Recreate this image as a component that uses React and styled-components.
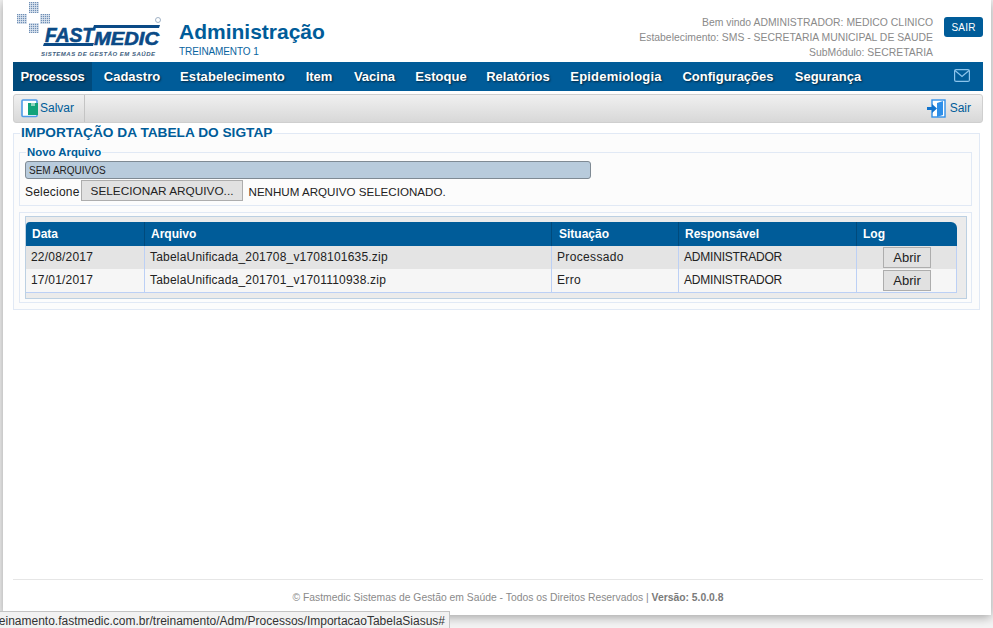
import React from "react";
import styled, { createGlobalStyle } from "styled-components";

const Global = createGlobalStyle`
  html, body {
    margin: 0;
    height: 100%;
    background: #f4f4f4;
    font-family: "Liberation Sans", Arial, sans-serif;
  }
`;

const Stage = styled.div`
  position: relative;
  width: 993px;
  height: 628px;
  overflow: hidden;
`;

const Frame = styled.div`
  margin-left: 3px;
  width: 988px;
  height: 615px;
  box-sizing: border-box;
  padding: 0 8px 0 10px;
  background: #fff;
  box-shadow: 0 2px 10px rgba(0, 0, 0, 0.35);
  display: flex;
  flex-direction: column;
`;

const Header = styled.header`
  height: 62px;
  display: flex;
`;

const LogoBox = styled.div`
  width: 166px;
  height: 62px;
  margin-left: -10px;
  margin-right: 10px;
  flex: none;
`;

const Brand = styled.div`
  padding-top: 19px;
`;

const Title = styled.h1`
  margin: 0 0 1px;
  font-size: 21px;
  line-height: 25px;
  font-weight: bold;
  color: #005c99;
`;

const Sub = styled.div`
  font-size: 10px;
  line-height: 13px;
  letter-spacing: -0.1px;
  color: #0a64a0;
`;

const UserInfo = styled.div`
  margin-left: auto;
  padding-top: 15px;
  text-align: right;
  font-size: 10.4px;
  line-height: 15px;
  color: #8a8a8a;
`;

const ExitButton = styled.button`
  align-self: flex-start;
  margin: 17px 0 0 11px;
  width: 39px;
  height: 20px;
  padding: 0;
  border: 0;
  border-radius: 3px;
  background: #005c99;
  color: #fff;
  font: 10px "Liberation Sans", Arial, sans-serif;
  letter-spacing: 0.2px;
`;

const Nav = styled.nav`
  height: 29px;
  display: flex;
  align-items: stretch;
  background: #005c99;
`;

const NavItem = styled.a`
  display: flex;
  align-items: center;
  justify-content: center;
  width: ${p => p.$w}px;
  margin-right: 4px;
  font-size: 13px;
  font-weight: bold;
  letter-spacing: ${p => p.$ls || 0}px;
  color: #fff;
  white-space: nowrap;
  text-shadow: 1px 1px 2px rgba(0, 0, 0, 0.6);
  background: ${p => (p.$active ? "#004a7c" : "none")};
`;

const MailIcon = styled.svg`
  margin: 7px 13px 0 auto;
  width: 16px;
  height: 13px;
`;

const Toolbar = styled.div`
  height: 29px;
  margin-top: 3px;
  box-sizing: border-box;
  display: flex;
  align-items: center;
  border: 1px solid #cfcfcf;
  border-radius: 3px;
  background: linear-gradient(#f0f0f0, #d8d8d8);
`;

const ToolButton = styled.a`
  display: flex;
  align-items: center;
  height: 100%;
  padding: 0 ${p => (p.$right ? "11px" : "10px")} 1px 7px;
  box-sizing: border-box;
  margin-left: ${p => (p.$right ? "auto" : "0")};
  border-right: ${p => (p.$right ? "0" : "1px solid #c4c4c4")};
  font-size: 12px;
  color: #005c99;
`;

const Fieldset = styled.fieldset`
  margin: ${p => p.$margin || "0"};
  padding: ${p => p.$padding || "0"};
  min-width: 0;
  border: 1px solid #e1e9f5;
  background: #fcfcfc;
`;

const MainLegend = styled.legend`
  margin-left: 1px;
  padding: 0 1px;
  font-size: 13.7px;
  line-height: 14px;
  font-weight: bold;
  color: #005c99;
`;

const SubLegend = styled.legend`
  margin-left: 1px;
  padding: 0 1px;
  font-size: 11.4px;
  line-height: 12px;
  font-weight: bold;
  color: #005c99;
`;

const MainFieldset = styled(Fieldset)`
  width: 967px;
  box-sizing: border-box;
  margin-top: 3px;
  padding: 0 7px 6px 5px;
`;

const Bar = styled.div`
  width: 566px;
  height: 18px;
  box-sizing: border-box;
  padding-left: 3px;
  border: 1px solid #7f8a94;
  border-radius: 3px;
  background: #b8cbdc;
  font-size: 10px;
  line-height: 17px;
  color: #222;
`;

const FileRow = styled.div`
  display: flex;
  align-items: center;
  height: 21px;
  box-sizing: border-box;
  padding-top: 2px;
  margin-top: 1px;
  font-size: 12px;
  letter-spacing: 0.2px;
  color: #222;
`;

const FileButton = styled.button`
  align-self: flex-start;
  height: 21px;
  width: 162px;
  margin: -2px 6px 0 1px;
  padding: 0 0 0 1px;
  border: 1px solid #adadad;
  background: #e1e1e1;
  font: 11.8px "Liberation Sans", Arial, sans-serif;
  color: #222;
`;

const FileName = styled.span`
  font-size: 11.6px;
  letter-spacing: 0;
`;

const TableBox = styled.div`
  border: 1px solid #bcd0e2;
  background: #ebebeb;
  padding: 5px 9px 5px 0;
`;

const Table = styled.table`
  width: 931px;
  table-layout: fixed;
  border-collapse: separate;
  border-spacing: 0;
  font-size: 12px;
  color: #222;
  border-bottom: 1px solid #bcd0f5;
`;

const HeadCell = styled.th`
  height: 24px;
  padding: 0 0 0 ${p => p.$pad}px;
  text-align: left;
  font-weight: bold;
  color: #fff;
  background: #005c99;
  border-left: ${p => (p.$first ? "0" : "1px solid #004a7c")};
  border-top-right-radius: ${p => (p.$last ? "6px" : "0")};
  border-top-left-radius: ${p => (p.$first ? "4px" : "0")};
`;

const Cell = styled.td`
  height: 23px;
  padding: 0 0 ${p => (p.$last ? 0 : 2)}px ${p => p.$pad || 5}px;
  box-sizing: border-box;
  white-space: nowrap;
  letter-spacing: ${p => p.$ls || 0}px;
  background: ${p => (p.$odd ? "#e4e4e4" : "#f6f6f6")};
  border-left: ${p => (p.$first ? "0" : "1px solid #bcd0f5")};
  border-right: ${p => (p.$last ? "1px solid #bcd0f5" : "0")};
`;

const OpenButton = styled.button`
  display: block;
  width: 48px;
  height: 21px;
  margin: 0 0 0 21px;
  padding: 0;
  border: 1px solid #adadad;
  background: #e1e1e1;
  font: 13px "Liberation Sans", Arial, sans-serif;
  color: #222;
`;

const Footer = styled.footer`
  margin-top: auto;
  height: 35px;
  padding-left: 20px;
  border-top: 1px solid #e6e6e6;
  text-align: center;
  font-size: 10.35px;
  line-height: 35px;
  color: #8a8a8a;
  & b {
    color: #7a7a7a;
  }
`;

const StatusTip = styled.div`
  position: absolute;
  left: 0;
  top: 611px;
  width: 450px;
  height: 17px;
  box-sizing: border-box;
  border: 1px solid #c4c4c4;
  border-left: 0;
  border-bottom: 0;
  background: #f2f2f2;
  font-size: 12px;
  line-height: 19px;
  color: #333;
  overflow: hidden;
  white-space: nowrap;
  direction: rtl;
  padding-right: 4px;
`;

const Dots = ({ x, y, w = 10, h = 10 }) => (
  <rect x={x} y={y} width={w} height={h} fill="url(#dots)" />
);

const Logo = () => (
  <svg width="166" height="62" viewBox="0 0 166 62">
    <defs>
      <pattern id="dots" width="2" height="2" patternUnits="userSpaceOnUse">
        <rect width="2" height="2" fill="#dfe7f1" />
        <rect width="1.2" height="1.2" fill="#6f8fb5" />
      </pattern>
    </defs>
    <Dots x={26} y={2} h={11} />
    <Dots x={14} y={14} />
    <Dots x={37} y={14} />
    <Dots x={26} y={23} />
    <path d="M91 25h66l-1 3H90z" fill="#0b4a86" />
    <path d="M41 43h50l-1 3H40z" fill="#0b4a86" />
    <text
      x={42}
      y={42}
      fontFamily="Liberation Sans"
      fontWeight="bold"
      fontStyle="italic"
      fontSize="20"
      textLength="49"
      lengthAdjust="spacingAndGlyphs"
      fill="#0b4a86"
      stroke="#0b4a86"
      strokeWidth="0.6"
    >
      FAST
    </text>
    <text
      x={91}
      y={45}
      fontFamily="Liberation Sans"
      fontWeight="bold"
      fontStyle="italic"
      fontSize="18"
      textLength="65"
      lengthAdjust="spacingAndGlyphs"
      fill="#0b4a86"
      stroke="#0b4a86"
      strokeWidth="0.6"
    >
      MEDIC
    </text>
    <circle cx={155} cy={20} r={2.5} fill="none" stroke="#8aa0b8" strokeWidth="0.8" />
    <text
      x={38}
      y={56}
      fontFamily="Liberation Sans"
      fontWeight="bold"
      fontStyle="italic"
      fontSize="6"
      textLength="114"
      fill="#3f5f80"
    >
      SISTEMAS DE GESTÃO EM SAÚDE
    </text>
  </svg>
);

const SaveIcon = () => (
  <svg width="18" height="19" viewBox="0 0 18 19" style={{ marginRight: 1 }}>
    <rect x="1" y="1" width="15" height="16.5" rx="1" fill="#fff" stroke="#4d9be8" strokeWidth="1.6" />
    <path d="M7 4h3v3h4V4h3v12H7z" fill="#12a37a" />
    <rect x="10" y="4" width="4" height="3" fill="#8fd4bd" />
  </svg>
);

const ExitIcon = () => (
  <svg width="19" height="19" viewBox="0 0 19 19" style={{ marginRight: 4 }}>
    <rect x="5" y="1" width="13" height="17" fill="#fff" stroke="#2f8fe8" strokeWidth="1.4" />
    <path d="M10 4l6-2v14l-6 2z" fill="#2f8fe8" />
    <path d="M0 8h5V5l5 4.5L5 14v-3H0z" fill="#1273cc" />
  </svg>
);

const menu = [
  { label: "Processos", w: 79, ls: -0.2 },
  { label: "Cadastro", w: 72 },
  { label: "Estabelecimento", w: 121, ls: 0.1 },
  { label: "Item", w: 44 },
  { label: "Vacina", w: 59 },
  { label: "Estoque", w: 66 },
  { label: "Relatórios", w: 80 },
  { label: "Epidemiologia", w: 108, ls: 0.2 },
  { label: "Configurações", w: 108 },
  { label: "Segurança", w: 84 }
];

const columns = [
  { title: "Data", width: 118, ls: 0.2, head: 6, pad: 5 },
  { title: "Arquivo", width: 407, ls: 0.2, head: 6, pad: 5 },
  { title: "Situação", width: 127, ls: 0.35, head: 7, pad: 5 },
  { title: "Responsável", width: 178, ls: -0.2, head: 6, pad: 5 },
  { title: "Log", width: 101, head: 6 }
];

const rows = [
  ["22/08/2017", "TabelaUnificada_201708_v1708101635.zip", "Processado", "ADMINISTRADOR"],
  ["17/01/2017", "TabelaUnificada_201701_v1701110938.zip", "Erro", "ADMINISTRADOR"]
];

export default function App() {
  return (
    <Stage>
      <Global />
      <Frame>
        <Header>
          <LogoBox>
            <Logo />
          </LogoBox>
          <Brand>
            <Title>Administração</Title>
            <Sub>TREINAMENTO 1</Sub>
          </Brand>
          <UserInfo>
            Bem vindo ADMINISTRADOR: MEDICO CLINICO
            <br />
            Estabelecimento: SMS - SECRETARIA MUNICIPAL DE SAUDE
            <br />
            SubMódulo: SECRETARIA
          </UserInfo>
          <ExitButton>SAIR</ExitButton>
        </Header>
        <Nav>
          {menu.map((item, i) => (
            <NavItem key={item.label} $w={item.w} $ls={item.ls} $active={i === 0}>
              {item.label}
            </NavItem>
          ))}
          <MailIcon viewBox="0 0 16 13">
            <rect x="0.6" y="0.6" width="14.8" height="11.8" rx="1.5" fill="none" stroke="#8cc4ec" strokeWidth="1.2" />
            <path d="M1 1.5l7 6 7-6" fill="none" stroke="#8cc4ec" strokeWidth="1.2" />
          </MailIcon>
        </Nav>
        <Toolbar>
          <ToolButton>
            <SaveIcon />
            Salvar
          </ToolButton>
          <ToolButton $right>
            <ExitIcon />
            Sair
          </ToolButton>
        </Toolbar>
        <MainFieldset>
          <MainLegend>IMPORTAÇÃO DA TABELA DO SIGTAP</MainLegend>
          <Fieldset $margin="6px 0 0 0" $padding="3px 5px 4px 5px">
            <SubLegend>Novo Arquivo</SubLegend>
            <Bar>SEM ARQUIVOS</Bar>
            <FileRow>
              Selecione
              <FileButton>SELECIONAR ARQUIVO...</FileButton>
              <FileName>NENHUM ARQUIVO SELECIONADO.</FileName>
            </FileRow>
          </Fieldset>
          <Fieldset $margin="6px 0 0 0" $padding="3px 4px 3px 5px">
            <TableBox>
              <Table>
                <colgroup>
                  {columns.map(c => (
                    <col key={c.title} width={c.width} />
                  ))}
                </colgroup>
                <thead>
                  <tr>
                    {columns.map((c, i) => (
                      <HeadCell key={c.title} $pad={c.head} $first={i === 0} $last={i === columns.length - 1}>
                        {c.title}
                      </HeadCell>
                    ))}
                  </tr>
                </thead>
                <tbody>
                  {rows.map((r, ri) => (
                    <tr key={r[0]}>
                      {r.map((v, i) => (
                        <Cell key={i} $odd={ri === 0} $first={i === 0} $ls={columns[i].ls} $pad={columns[i].pad}>
                          {v}
                        </Cell>
                      ))}
                      <Cell $odd={ri === 0} $last>
                        <OpenButton>Abrir</OpenButton>
                      </Cell>
                    </tr>
                  ))}
                </tbody>
              </Table>
            </TableBox>
          </Fieldset>
        </MainFieldset>
        <Footer>
          © Fastmedic Sistemas de Gestão em Saúde - Todos os Direitos Reservados | <b>Versão: 5.0.0.8</b>
        </Footer>
      </Frame>
      <StatusTip>
        <bdi>http://treinamento.fastmedic.com.br/treinamento/Adm/Processos/ImportacaoTabelaSiasus#</bdi>
      </StatusTip>
    </Stage>
  );
}
